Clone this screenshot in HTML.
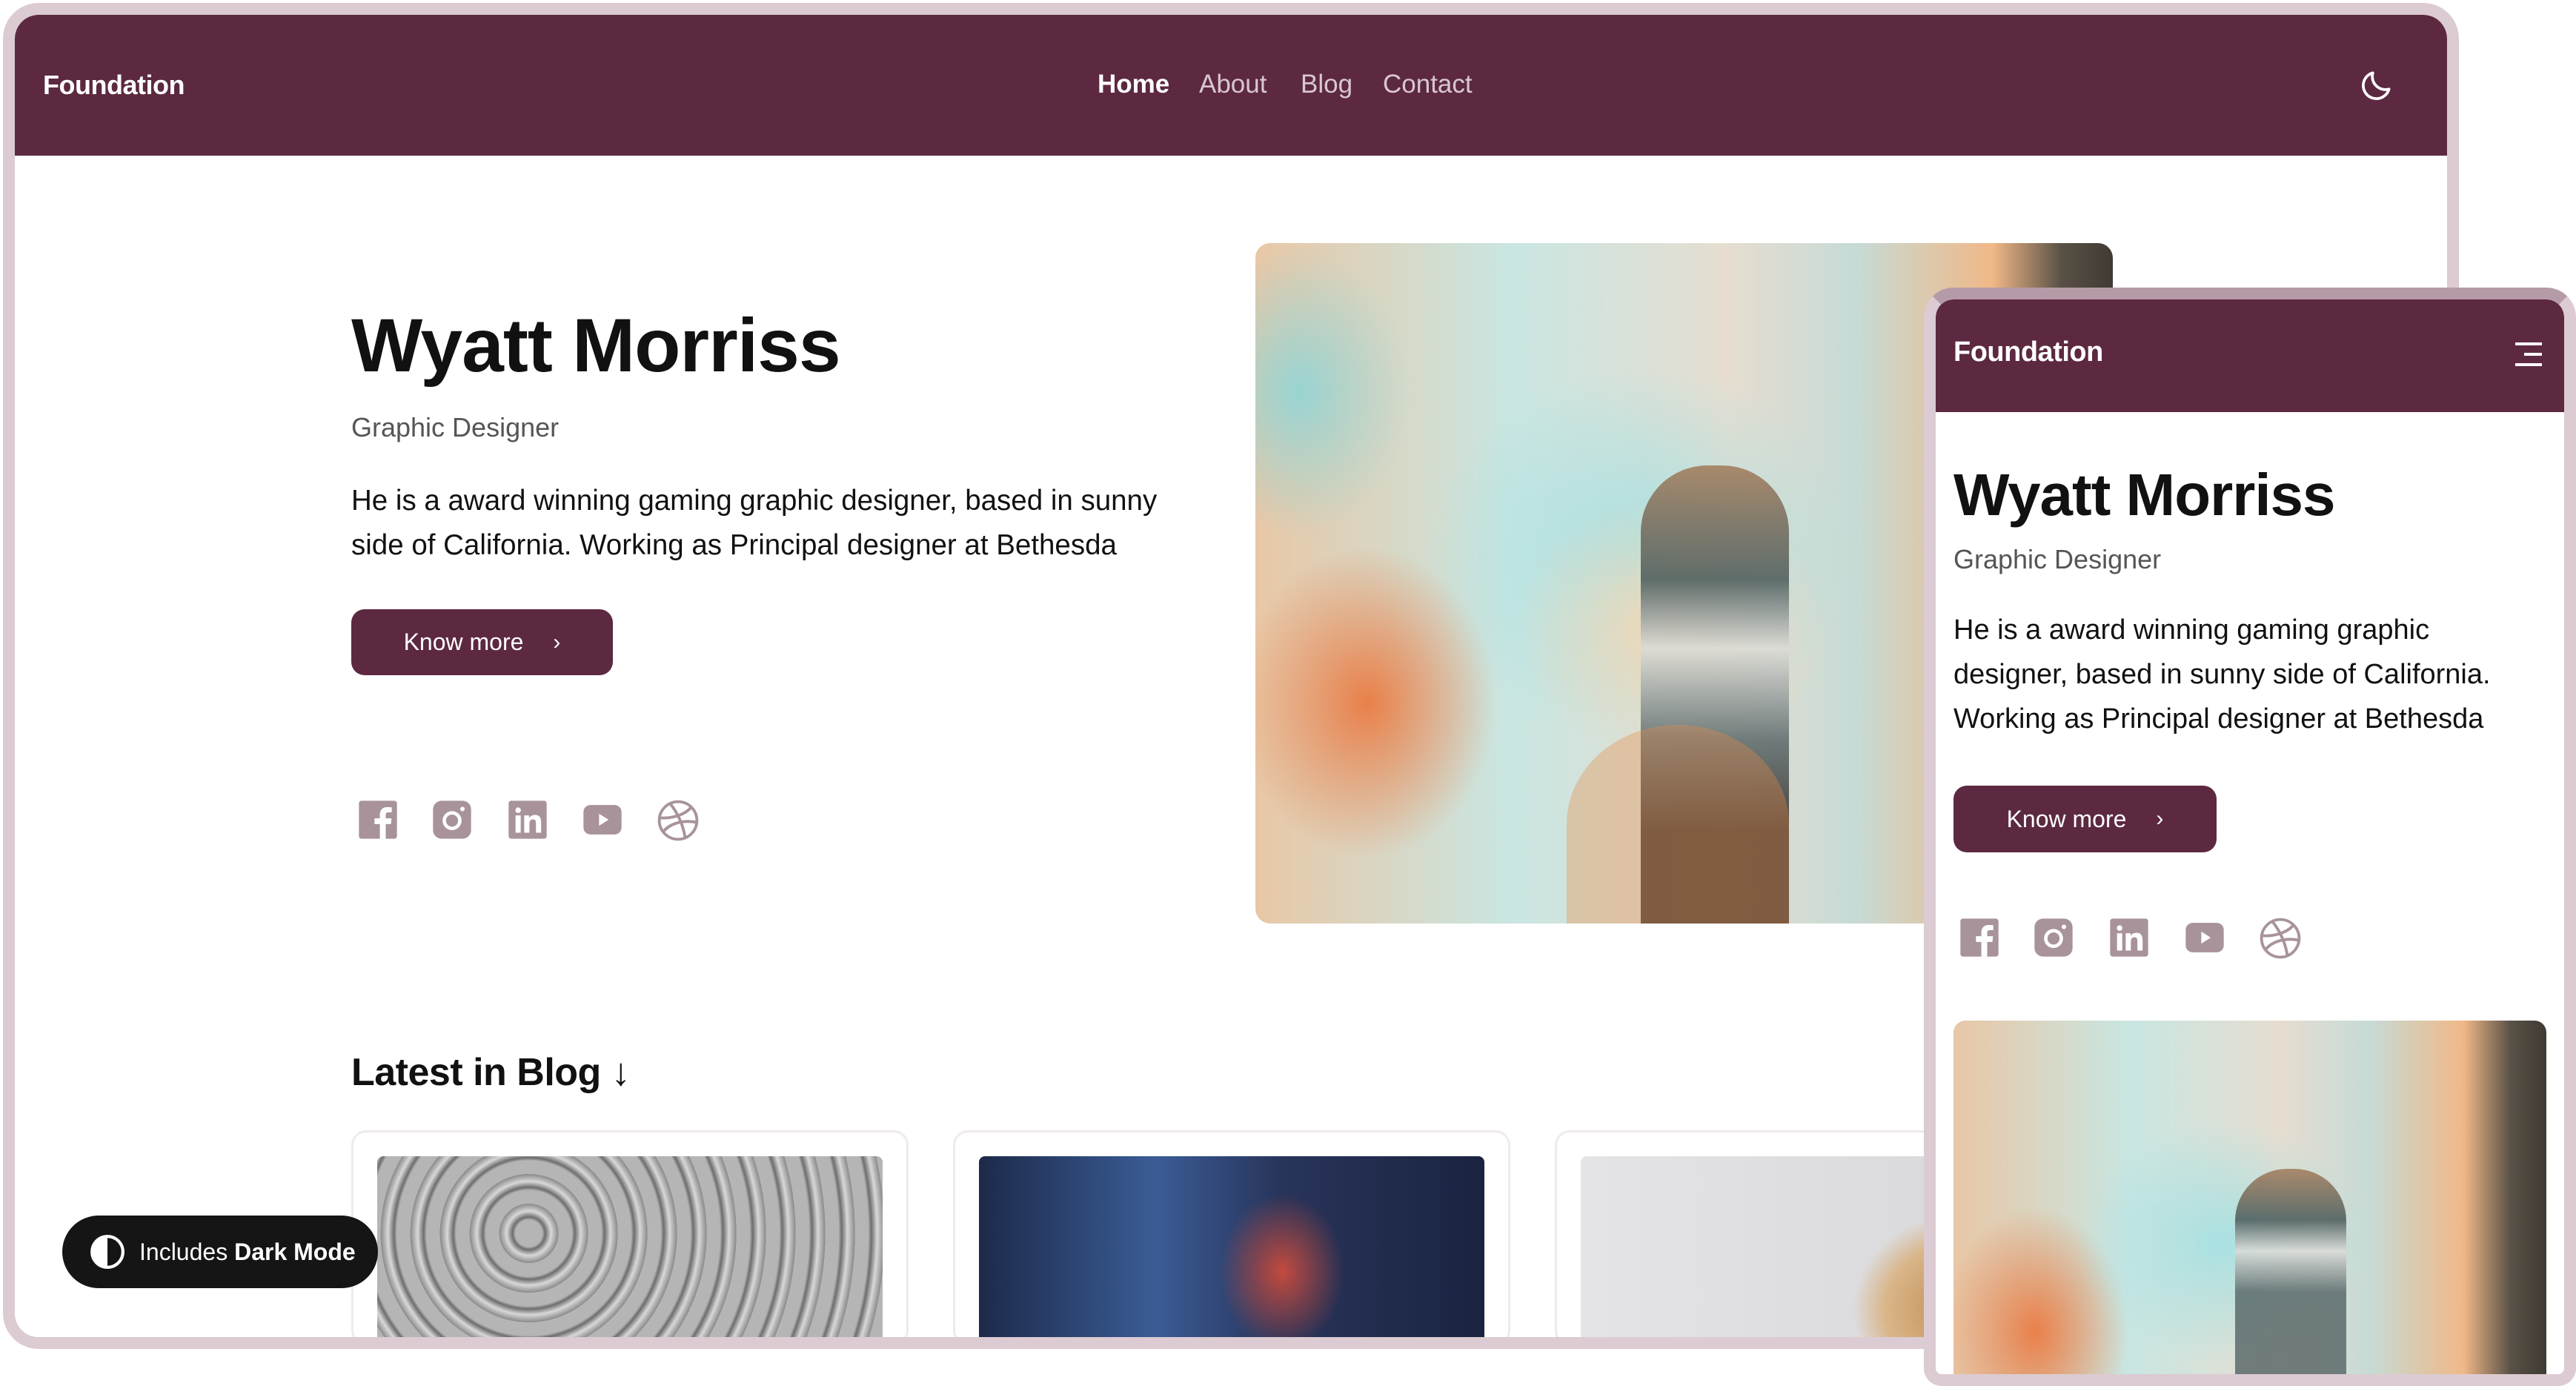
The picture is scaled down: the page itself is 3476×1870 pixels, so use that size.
<!DOCTYPE html>
<html style="overflow:hidden;height:1870px;width:3476px"><head><meta charset="utf-8"><style>
*{margin:0;padding:0;box-sizing:border-box}
body{width:3476px;height:1870px;background:#fff;position:relative;overflow:hidden;font-family:"Liberation Sans",sans-serif;color:#111}
.abs{position:absolute}
.frame{left:4px;top:4px;width:3314px;height:1816px;border:16px solid #dccbd2;border-radius:48px;background:#fff;overflow:hidden}
.nav{background:#5c2941;color:#fff}
.brand{font-weight:bold;font-size:36px;letter-spacing:-0.5px}
.links span{position:absolute;font-size:35px;color:#d9c7cf;top:0}
h1{font-weight:900;letter-spacing:-1px;white-space:nowrap}
.btn{background:#5c2941;color:#fff;border-radius:18px;font-size:32px;display:flex;align-items:center;justify-content:center;gap:40px}
.sub{color:#555}
.card{border:3px solid #efeaec;border-radius:20px;background:#fff;overflow:hidden}
.icons svg{position:absolute}
</style></head><body>

<div class="abs frame">
  <div class="abs nav" style="left:0;top:0;width:100%;height:190px;border-radius:32px 32px 0 0">
    <div class="abs brand" style="left:38px;top:74px">Foundation</div>
    <div class="abs links" style="left:0;top:74px">
      <span style="left:1461px;color:#fff;font-weight:bold">Home</span>
      <span style="left:1598px">About</span>
      <span style="left:1735px">Blog</span>
      <span style="left:1846px">Contact</span>
    </div>
    <svg class="abs" style="left:3162px;top:70px" width="50" height="50" viewBox="0 0 24 24" fill="none" stroke="#fff" stroke-width="1.8" stroke-linecap="round" stroke-linejoin="round"><path d="M20 14.5A8.5 8.5 0 0 1 9.5 4a8.5 8.5 0 1 0 10.5 10.5z"/></svg>
  </div>

  <h1 class="abs" style="left:454px;top:388px;font-size:102px">Wyatt Morriss</h1>
  <div class="abs sub" style="left:454px;top:536px;font-size:36px">Graphic Designer</div>
  <div class="abs" style="left:454px;top:626px;font-size:38.5px;line-height:60px;width:1150px">He is a award winning gaming graphic designer, based in sunny side of California. Working as Principal designer at Bethesda</div>
  <div class="abs btn" style="left:454px;top:802px;width:353px;height:89px">Know more <span style="font-size:30px">›</span></div>

  <div class="abs icons" style="left:0;top:0">
    <svg style="left:462px;top:1058px" width="56" height="56" viewBox="0 0 24 24"><rect x="1" y="1" width="22" height="22" rx="1.5" fill="#a8939b"/><path d="M16.5 23v-8.5h3l.4-3.3h-3.4V9.3c0-1 .3-1.6 1.7-1.6h1.8V4.8c-.3 0-1.4-.1-2.6-.1-2.6 0-4.3 1.6-4.3 4.4v2.1H10v3.3h3.1V23z" fill="#fff"/></svg>
    <svg style="left:562px;top:1058px" width="56" height="56" viewBox="0 0 24 24"><rect x="1" y="1" width="22" height="22" rx="5" fill="#a8939b"/><circle cx="12" cy="12.5" r="4.5" fill="none" stroke="#fff" stroke-width="2"/><circle cx="18" cy="5.8" r="1.3" fill="#fff"/></svg>
    <svg style="left:664px;top:1058px" width="56" height="56" viewBox="0 0 24 24"><rect x="1" y="1" width="22" height="22" rx="1.5" fill="#a8939b"/><circle cx="6.5" cy="6.5" r="1.6" fill="#fff"/><rect x="5" y="9.5" width="3" height="10" fill="#fff"/><path d="M10 9.5h2.8v1.5c.6-1 1.8-1.8 3.4-1.8 2.8 0 3.6 1.8 3.6 4.3v6h-3v-5.4c0-1.3-.3-2.3-1.7-2.3s-2.1 1-2.1 2.3v5.4h-3z" fill="#fff"/></svg>
    <svg style="left:763px;top:1058px" width="60" height="56" viewBox="0 0 24 24"><rect x="1" y="3.5" width="22" height="17" rx="4" fill="#a8939b"/><path d="M10 8.5l5.5 3.5-5.5 3.5z" fill="#fff"/></svg>
    <svg style="left:866px;top:1058px" width="58" height="58" viewBox="0 0 24 24" fill="none" stroke="#a8939b" stroke-width="1.6"><circle cx="12" cy="12" r="10.5"/><path d="M2 10.5c5 .5 13-1 17-5.5M7.5 2.5C12 8 15 15 16 22M3.5 18.5C7 14 14 11.5 22 13"/></svg>
  </div>

  <div class="abs" style="left:1674px;top:308px;width:1157px;height:918px;border-radius:20px;overflow:hidden;background:
    radial-gradient(ellipse 300px 260px at 560px 520px,#f3d7b5 0%,rgba(243,215,181,0) 70%),
    radial-gradient(ellipse 380px 340px at 520px 420px,#a9e1e2 0%,rgba(169,225,226,0) 75%),
    radial-gradient(ellipse 250px 300px at 150px 620px,#e9804a 0%,rgba(233,128,74,0) 70%),
    radial-gradient(ellipse 200px 260px at 60px 200px,#98d4d2 0%,rgba(152,212,210,0) 75%),
    linear-gradient(90deg,#e8c7a6 0%,#c9e6e2 30%,#e6ddd0 55%,#c6dbd6 70%,#f0b887 86%,#595146 94%,#3f3a33 100%)">
    <div class="abs" style="left:520px;top:300px;width:200px;height:618px;background:linear-gradient(180deg,#a27a58 0%,#4a5a5a 25%,#dcdcd8 40%,#5b6a6b 60%,#2e2926 80%);border-radius:90px 90px 0 0;opacity:.85"></div>
    <div class="abs" style="left:420px;top:650px;width:300px;height:268px;background:#e88a45;opacity:.35;border-radius:50% 50% 0 0"></div>
  </div>

  <div class="abs" style="left:454px;top:1397px;font-size:52px;font-weight:bold;letter-spacing:-0.5px">Latest in Blog <span style="font-weight:normal">↓</span></div>

  <div class="abs card" style="left:454px;top:1505px;width:752px;height:290px"><div style="margin:32px 32px 0;height:260px;border-radius:8px;background:repeating-radial-gradient(circle at 30% 40%,#b5b5b5 0 18px,#6d6d6d 22px,#d8d8d8 30px,#8a8a8a 40px)"></div></div>
  <div class="abs card" style="left:1266px;top:1505px;width:752px;height:290px"><div style="margin:32px 32px 0;height:260px;border-radius:8px;background:radial-gradient(ellipse 120px 150px at 60% 60%,#c34a3e 0%,rgba(0,0,0,0) 70%),linear-gradient(90deg,#1d2a4a,#3a5c96 35%,#28345a 60%,#1a2340)"></div></div>
  <div class="abs card" style="left:2078px;top:1505px;width:752px;height:290px"><div style="margin:32px 32px 0;height:260px;border-radius:8px;background:radial-gradient(ellipse 200px 180px at 75% 80%,#c08b52 0%,#d9b588 50%,rgba(0,0,0,0) 72%),linear-gradient(90deg,#e4e4e6,#d6d6d8)"></div></div>

  <div class="abs" style="left:64px;top:1620px;width:426px;height:98px;border-radius:49px;background:#151515;color:#fff;font-size:32px;display:flex;align-items:center;padding-left:36px">
    <svg width="50" height="50" viewBox="0 0 24 24"><circle cx="12" cy="12" r="10" fill="none" stroke="#fff" stroke-width="2"/><path d="M12 2a10 10 0 0 0 0 20z" fill="#fff"/></svg>
    <span style="margin-left:18px">Includes <b>Dark Mode</b></span>
  </div>
</div>

<!-- mobile -->
<div class="abs" style="left:2596px;top:388px;width:880px;height:1482px;border:16px solid #dccbd2;border-top-color:#b59ba7;border-radius:40px 40px 24px 24px;background:#fff;overflow:hidden">
  <div class="abs nav" style="left:0;top:0;width:100%;height:152px;border-radius:24px 24px 0 0">
    <div class="abs brand" style="left:24px;top:50px;font-size:38px">Foundation</div>
    <div class="abs" style="left:782px;top:58px;width:36px;height:4px;background:#fff"></div>
    <div class="abs" style="left:794px;top:72px;width:24px;height:4px;background:#fff"></div>
    <div class="abs" style="left:782px;top:86px;width:36px;height:4px;background:#fff"></div>
  </div>
  <h1 class="abs" style="left:24px;top:218px;font-size:80px">Wyatt Morriss</h1>
  <div class="abs sub" style="left:24px;top:330px;font-size:36px">Graphic Designer</div>
  <div class="abs" style="left:24px;top:416px;font-size:38px;line-height:60px;width:780px">He is a award winning gaming graphic designer, based in sunny side of California. Working as Principal designer at Bethesda</div>
  <div class="abs btn" style="left:24px;top:656px;width:355px;height:90px">Know more <span style="font-size:30px">›</span></div>
  <div class="abs icons" style="left:0;top:0">
    <svg style="left:31px;top:833px" width="56" height="56" viewBox="0 0 24 24"><rect x="1" y="1" width="22" height="22" rx="1.5" fill="#a8939b"/><path d="M16.5 23v-8.5h3l.4-3.3h-3.4V9.3c0-1 .3-1.6 1.7-1.6h1.8V4.8c-.3 0-1.4-.1-2.6-.1-2.6 0-4.3 1.6-4.3 4.4v2.1H10v3.3h3.1V23z" fill="#fff"/></svg>
    <svg style="left:131px;top:833px" width="56" height="56" viewBox="0 0 24 24"><rect x="1" y="1" width="22" height="22" rx="5" fill="#a8939b"/><circle cx="12" cy="12.5" r="4.5" fill="none" stroke="#fff" stroke-width="2"/><circle cx="18" cy="5.8" r="1.3" fill="#fff"/></svg>
    <svg style="left:233px;top:833px" width="56" height="56" viewBox="0 0 24 24"><rect x="1" y="1" width="22" height="22" rx="1.5" fill="#a8939b"/><circle cx="6.5" cy="6.5" r="1.6" fill="#fff"/><rect x="5" y="9.5" width="3" height="10" fill="#fff"/><path d="M10 9.5h2.8v1.5c.6-1 1.8-1.8 3.4-1.8 2.8 0 3.6 1.8 3.6 4.3v6h-3v-5.4c0-1.3-.3-2.3-1.7-2.3s-2.1 1-2.1 2.3v5.4h-3z" fill="#fff"/></svg>
    <svg style="left:333px;top:833px" width="60" height="56" viewBox="0 0 24 24"><rect x="1" y="3.5" width="22" height="17" rx="4" fill="#a8939b"/><path d="M10 8.5l5.5 3.5-5.5 3.5z" fill="#fff"/></svg>
    <svg style="left:436px;top:833px" width="58" height="58" viewBox="0 0 24 24" fill="none" stroke="#a8939b" stroke-width="1.6"><circle cx="12" cy="12" r="10.5"/><path d="M2 10.5c5 .5 13-1 17-5.5M7.5 2.5C12 8 15 15 16 22M3.5 18.5C7 14 14 11.5 22 13"/></svg>
  </div>
  <div class="abs" style="left:24px;top:973px;width:800px;height:477px;border-radius:16px 16px 0 0;overflow:hidden;background:
    radial-gradient(ellipse 260px 220px at 360px 300px,#a9e1e2 0%,rgba(169,225,226,0) 75%),
    radial-gradient(ellipse 180px 240px at 110px 420px,#e9804a 0%,rgba(233,128,74,0) 70%),
    linear-gradient(90deg,#e8c7a6 0%,#c9e6e2 30%,#e6ddd0 55%,#c6dbd6 70%,#f0b887 86%,#595146 94%,#3f3a33 100%)">
    <div class="abs" style="left:380px;top:200px;width:150px;height:277px;background:linear-gradient(180deg,#a27a58 0%,#4a5a5a 25%,#dcdcd8 40%,#5b6a6b 60%);border-radius:70px 70px 0 0;opacity:.85"></div>
  </div>
</div>
</body></html>
